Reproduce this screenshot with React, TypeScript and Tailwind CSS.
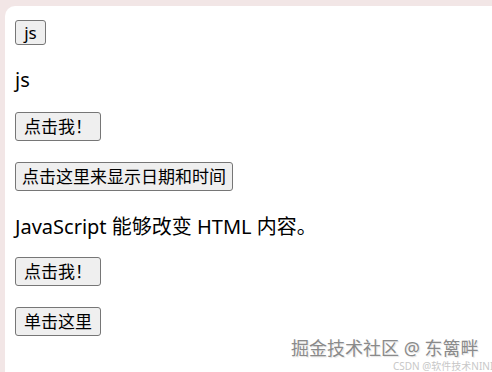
import React from "react";

const font = { fontFamily: '"Noto Sans", "Noto Sans CJK SC", sans-serif' };

function Btn({ children, className = "" }: { children: React.ReactNode; className?: string }) {
  return (
    <button
      className={`self-start flex items-center justify-center whitespace-nowrap bg-[#efefef] border border-[#767676] rounded-[3px] text-black text-[17px] leading-none px-0 ${className}`}
    >
      {children}
    </button>
  );
}

export default function App() {
  return (
    <div className="relative w-[492px] h-[372px] overflow-hidden bg-[#f2e6e6] pt-[6px] pl-[5px] flex" style={font}>
      <div className="flex-1 bg-white rounded-tl-[10px] flex flex-col pl-[10px] pt-[14px]">
        <Btn className="h-[25px] w-[31px] text-[16px]">js</Btn>
        <div className="mt-[21px] h-[28px] flex items-center text-[20px] text-black">js</div>
        <Btn className="mt-[18px] h-[29px] w-[86px]">点击我！</Btn>
        <Btn className="mt-[21px] h-[29px] w-[218px]">点击这里来显示日期和时间</Btn>
        <div className="mt-[22px] h-[28px] flex items-center text-[20px] text-black whitespace-nowrap">JavaScript 能够改变 HTML 内容。</div>
        <Btn className="mt-[16px] h-[29px] w-[86px]">点击我！</Btn>
        <Btn className="mt-[21px] h-[29px] w-[86px]">单击这里</Btn>
      </div>
      <div
        className="absolute left-[291px] top-[337px] text-[18px] leading-[22px] text-[#8a8a8a] whitespace-nowrap"
        style={{ textShadow: "0 0 2px #fff, 1px 1px 1px #ddd" }}
      >
        掘金技术社区 @ 东篱畔
      </div>
      <div className="absolute left-[393px] top-[361px] text-[10px] leading-[11px] text-[#c8c8c8] whitespace-nowrap">
        CSDN @软件技术NINI
      </div>
    </div>
  );
}
